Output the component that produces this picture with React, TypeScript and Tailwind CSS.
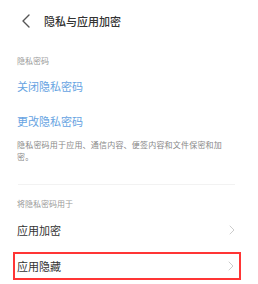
const font = { fontFamily: '"Noto Sans CJK SC", "Noto Sans", sans-serif' }

function Chevron({ className }: { className?: string }) {
	return (
		<svg width="6" height="10" viewBox="0 0 6 10" className={className} fill="none">
			<path d="M1 1l4 4-4 4" stroke="currentColor" strokeWidth="1" strokeLinecap="round" strokeLinejoin="round" />
		</svg>
	)
}

export default function App() {
	return (
		<div className="w-[258px] h-[284px] overflow-hidden bg-white" style={font}>
			<header className="flex h-[42px] items-center pl-[21px]">
				<svg width="10" height="14" viewBox="0 0 10 14" fill="none" className="text-[#555]">
					<path d="M8 1L2 7l6 6" stroke="currentColor" strokeWidth="1.4" strokeLinecap="round" strokeLinejoin="round" />
				</svg>
				<h1 className="ml-[13px] text-[11px] font-medium text-[#333]">隐私与应用加密</h1>
			</header>

			<div className="mt-[8px] flex h-[22px] items-center pl-[17px] text-[8px] text-[#999]">隐私密码</div>
			<div className="flex h-[28px] items-center pl-[17px] text-[11px] text-[#66a3e2]">关闭隐私密码</div>
			<div className="mt-[4px] flex h-[34px] items-center pl-[17px] text-[11px] text-[#66a3e2]">更改隐私密码</div>
			<p className="mt-[1px] w-[224px] pl-[17px] text-[8px] leading-[12px] tracking-[0.2px] text-[#888]">
				隐私密码用于应用、通信内容、便签内容和文件保密和加密。
			</p>

			<div className="ml-[18px] mt-[21px] h-px w-[217px] bg-[#f2f2f2]" />

			<div className="mt-[9px] flex h-[20px] items-center pl-[17px] text-[8px] text-[#999]">将隐私密码用于</div>
			<div className="flex h-[32px] items-center justify-between pl-[17px] pr-[23px] text-[11px] text-[#333]">
				<span>应用加密</span>
				<Chevron className="text-[#ccc]" />
			</div>
			<div className="ml-[13px] mt-[6px] flex h-[28px] w-[228px] items-center justify-between border-2 border-[#ff3535] pl-[2px] pr-[5px] text-[11px] text-[#333]">
				<span>应用隐藏</span>
				<Chevron className="text-[#ccc]" />
			</div>
		</div>
	)
}
